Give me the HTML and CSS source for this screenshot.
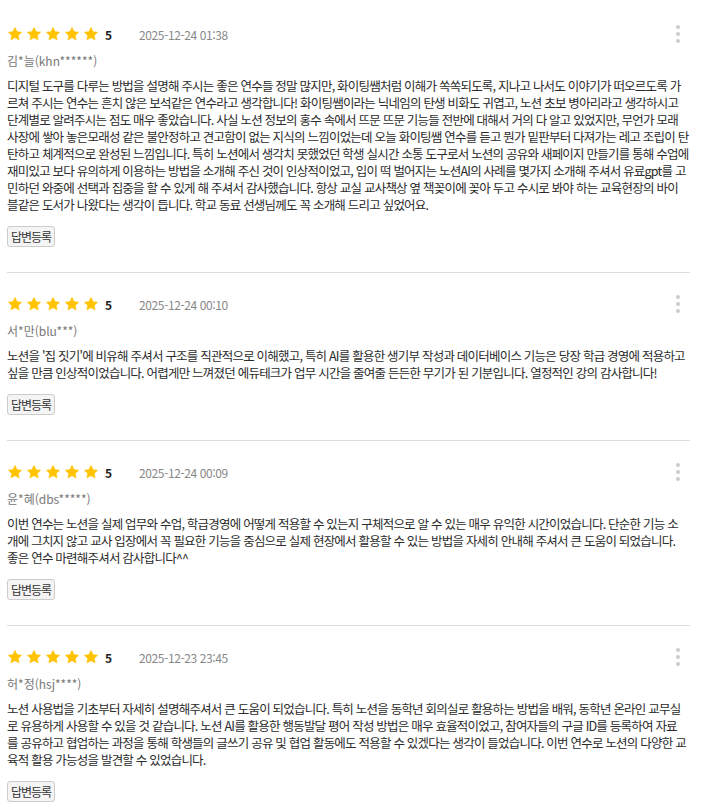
FILE: index.html
```html
<!DOCTYPE html>
<html lang="ko">
<head>
<meta charset="utf-8">
<link rel="stylesheet" href="styles.css">
</head>
<body>
<svg width="0" height="0" class="defs">
  <defs>
    <symbol id="star" viewBox="0 0 24 24"><path d="M12 1.8l3.1 6.5 7 .9-5.1 4.9 1.3 7L12 17.7l-6.3 3.4 1.3-7-5.1-4.9 7-.9z" stroke-linejoin="round"/></symbol>
  </defs>
</svg>
<div class="reviews">
  <div class="review">
    <div class="head">
      <div class="stars"><svg><use href="#star"/></svg><svg><use href="#star"/></svg><svg><use href="#star"/></svg><svg><use href="#star"/></svg><svg><use href="#star"/></svg></div>
      <span class="score">5</span>
      <span class="date">2025-12-24 01:38</span>
      <span class="more"><i></i><i></i><i></i></span>
    </div>
    <div class="name">김*늘(khn******)</div>
    <p class="body">디지털 도구를 다루는 방법을 설명해 주시는 좋은 연수들 정말 많지만, 화이팅쌤처럼 이해가 쏙쏙되도록, 지나고 나서도 이야기가 떠오르도록 가<br>르쳐 주시는 연수는 흔치 않은 보석같은 연수라고 생각합니다! 화이팅쌤이라는 닉네임의 탄생 비화도 귀엽고, 노션 초보 병아리라고 생각하시고<br>단계별로 알려주시는 점도 매우 좋았습니다. 사실 노션 정보의 홍수 속에서 뜨문 뜨문 기능들 전반에 대해서 거의 다 알고 있었지만, 무언가 모래<br>사장에 쌓아 놓은모래성 같은 불안정하고 견고함이 없는 지식의 느낌이었는데 오늘 화이팅쌤 연수를 듣고 뭔가 밑판부터 다져가는 레고 조립이 탄<br>탄하고 체계적으로 완성된 느낌입니다. 특히 노션에서 생각치 못했었던 학생 실시간 소통 도구로서 노션의 공유와 새페이지 만들기를 통해 수업에<br>재미있고 보다 유의하게 이용하는 방법을 소개해 주신 것이 인상적이었고, 입이 떡 벌어지는 노션AI의 사례를 몇가지 소개해 주셔서 유료gpt를 고<br>민하던 와중에 선택과 집중을 할 수 있게 해 주셔서 감사했습니다. 항상 교실 교사책상 옆 책꽂이에 꽂아 두고 수시로 봐야 하는 교육현장의 바이<br>블같은 도서가 나왔다는 생각이 듭니다. 학교 동료 선생님께도 꼭 소개해 드리고 싶었어요.</p>
    <button class="reply" type="button">답변등록</button>
  </div>
  <div class="review">
    <div class="head">
      <div class="stars"><svg><use href="#star"/></svg><svg><use href="#star"/></svg><svg><use href="#star"/></svg><svg><use href="#star"/></svg><svg><use href="#star"/></svg></div>
      <span class="score">5</span>
      <span class="date">2025-12-24 00:10</span>
      <span class="more"><i></i><i></i><i></i></span>
    </div>
    <div class="name">서*만(blu***)</div>
    <p class="body">노션을 '집 짓기'에 비유해 주셔서 구조를 직관적으로 이해했고, 특히 AI를 활용한 생기부 작성과 데이터베이스 기능은 당장 학급 경영에 적용하고<br>싶을 만큼 인상적이었습니다. 어렵게만 느껴졌던 에듀테크가 업무 시간을 줄여줄 든든한 무기가 된 기분입니다. 열정적인 강의 감사합니다!</p>
    <button class="reply" type="button">답변등록</button>
  </div>
  <div class="review">
    <div class="head">
      <div class="stars"><svg><use href="#star"/></svg><svg><use href="#star"/></svg><svg><use href="#star"/></svg><svg><use href="#star"/></svg><svg><use href="#star"/></svg></div>
      <span class="score">5</span>
      <span class="date">2025-12-24 00:09</span>
      <span class="more"><i></i><i></i><i></i></span>
    </div>
    <div class="name">윤*혜(dbs*****)</div>
    <p class="body">이번 연수는 노션을 실제 업무와 수업, 학급경영에 어떻게 적용할 수 있는지 구체적으로 알 수 있는 매우 유익한 시간이었습니다. 단순한 기능 소<br>개에 그치지 않고 교사 입장에서 꼭 필요한 기능을 중심으로 실제 현장에서 활용할 수 있는 방법을 자세히 안내해 주셔서 큰 도움이 되었습니다.<br>좋은 연수 마련해주셔서 감사합니다^^</p>
    <button class="reply" type="button">답변등록</button>
  </div>
  <div class="review">
    <div class="head">
      <div class="stars"><svg><use href="#star"/></svg><svg><use href="#star"/></svg><svg><use href="#star"/></svg><svg><use href="#star"/></svg><svg><use href="#star"/></svg></div>
      <span class="score">5</span>
      <span class="date">2025-12-23 23:45</span>
      <span class="more"><i></i><i></i><i></i></span>
    </div>
    <div class="name">허*정(hsj****)</div>
    <p class="body">노션 사용법을 기초부터 자세히 설명해주셔서 큰 도움이 되었습니다. 특히 노션을 동학년 회의실로 활용하는 방법을 배워, 동학년 온라인 교무실<br>로 유용하게 사용할 수 있을 것 같습니다. 노션 AI를 활용한 행동발달 평어 작성 방법은 매우 효율적이었고, 참여자들의 구글 ID를 등록하여 자료<br>를 공유하고 협업하는 과정을 통해 학생들의 글쓰기 공유 및 협업 활동에도 적용할 수 있겠다는 생각이 들었습니다. 이번 연수로 노션의 다양한 교<br>육적 활용 가능성을 발견할 수 있었습니다.</p>
    <button class="reply" type="button">답변등록</button>
  </div>
</div>
</body>
</html>
```
FILE: styles.css
```css
* { box-sizing: border-box; }
html, body { margin: 0; padding: 0; background: #fff; }
body {
  font-family: "Noto Sans CJK KR", "Noto Sans", sans-serif;
  color: #333;
  overflow: hidden;
}
.defs { position: absolute; width: 0; height: 0; }
.reviews { padding: 0 15px 0 7px; }
.review {
  padding: 21px 0 25px;
  border-bottom: 1px solid #ddd;
}
.review:first-child { padding-top: 24px; }
.head {
  display: flex;
  align-items: center;
  height: 20px;
}
.stars { display: flex; gap: 3px; }
.stars svg { width: 16px; height: 16px; fill: #FFC300; stroke: #FFC300; stroke-width: 0.6; }
.score {
  margin-left: 6px;
  font-size: 12px;
  font-weight: 700;
  color: #222;
}
.date {
  margin-left: 27px;
  font-size: 12px;
  color: #888;
  letter-spacing: -0.4px;
}
.more {
  margin-left: auto;
  margin-right: 6px;
  width: 12px;
  display: flex;
  flex-direction: column;
  align-items: center;
  gap: 3px;
}
.more i { display: block; width: 4px; height: 4px; border-radius: 50%; background: #ccc; }
.name {
  margin-top: 8px;
  font-size: 12px;
  line-height: 18px;
  color: #777;
}
.body {
  margin: 7px 0 0;
  font-size: 12.5px;
  line-height: 17px;
  letter-spacing: -0.78px;
  color: #2b2b2b;
  white-space: nowrap;
}
.reply {
  display: block;
  margin-top: 13px;
  font-family: inherit;
  font-size: 12px;
  line-height: 15px;
  letter-spacing: -1px;
  padding: 2px 3px;
  color: #333;
  background: #f4f4f4;
  border: 1px solid #ccc;
  border-radius: 3px;
}
```
